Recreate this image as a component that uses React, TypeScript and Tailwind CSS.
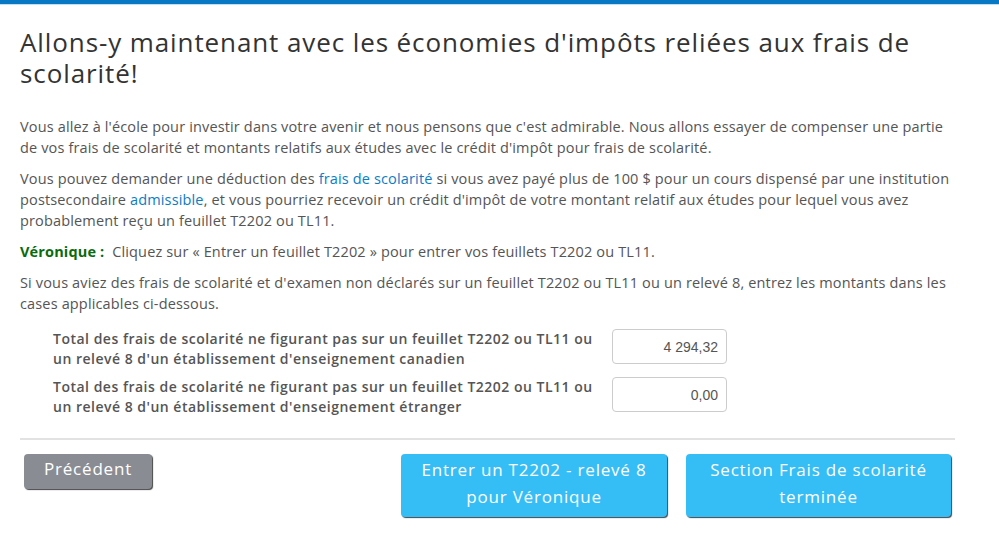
import React from 'react';

const rows = [
    { label: "Total des frais de scolarité ne figurant pas sur un feuillet T2202 ou TL11 ou un relevé 8 d'un établissement d'enseignement canadien", value: '4 294,32' },
    { label: "Total des frais de scolarité ne figurant pas sur un feuillet T2202 ou TL11 ou un relevé 8 d'un établissement d'enseignement étranger", value: '0,00' },
];

export default function App() {
    return (
        <div className="w-[999px] h-[545px] bg-white overflow-hidden font-['Open_Sans','Noto_Sans',sans-serif]">
            {/* top stripe */}
            <div className="h-[4px] bg-[#0678c4]" />
            <div className="h-[1px] bg-[#bfdff3]" />

            <div className="pl-[20px] pr-[39px] pt-[22px]">
                <h1 className="text-[26px] leading-[31px] text-[#333] tracking-[0.9px] w-[935px]">
                    Allons-y maintenant avec les économies d'impôts reliées aux frais de scolarité!
                </h1>

                <div className="mt-[27px] text-[14.5px] leading-[21px] text-[#555] tracking-[0.15px] flex flex-col gap-[10px]">
                    <p>
                        Vous allez à l'école pour investir dans votre avenir et nous pensons que c'est admirable. Nous allons essayer de compenser une partie de vos frais de scolarité et montants relatifs aux études avec le crédit d'impôt pour frais de scolarité.
                    </p>
                    <p>
                        Vous pouvez demander une déduction des <span className="text-[#0b7dc6]">frais de scolarité</span> si vous avez payé plus de 100 $ pour un cours dispensé par une institution postsecondaire <span className="text-[#0b7dc6]">admissible</span>, et vous pourriez recevoir un crédit d'impôt de votre montant relatif aux études pour lequel vous avez probablement reçu un feuillet T2202 ou TL11.
                    </p>
                    <p>
                        <strong className="text-[#0a6b0a] font-bold">Véronique :</strong>&nbsp; Cliquez sur « Entrer un feuillet T2202 » pour entrer vos feuillets T2202 ou TL11.
                    </p>
                    <p>
                        Si vous aviez des frais de scolarité et d'examen non déclarés sur un feuillet T2202 ou TL11 ou un relevé 8, entrez les montants dans les cases applicables ci-dessous.
                    </p>
                </div>

                {/* amount rows */}
                <div className="mt-[15px] pl-[33px] flex flex-col gap-[8px]">
                    {rows.map((r, i) => (
                        <div key={i} className="flex items-start">
                            <div className="w-[545px] text-[14px] leading-[20px] font-semibold tracking-[0.5px] text-[#555]">{r.label}</div>
                            <input
                                readOnly
                                value={r.value}
                                className="ml-[14px] mt-0 w-[115px] h-[35px] border border-[#ccc] rounded-[4px] text-right pr-[8px] text-[14px] text-[#555] font-['Liberation_Sans',Arial,sans-serif] outline-none"
                            />
                        </div>
                    ))}
                </div>

                <div className="mt-[21px] border-t-2 border-[#e2e2e2] w-[935px]" />

                {/* buttons */}
                <div className="mt-[14px] flex items-start w-[931px] tracking-[0.8px]">
                    <button className="ml-[4px] w-[128px] h-[35px] rounded-[4px] bg-[#8a8c93] text-white text-[17px] leading-[20px] pb-[5px] shadow-[1px_1px_1px_#444]">
                        Précédent
                    </button>
                    <div className="ml-auto flex gap-[19px]">
                        <button className="w-[266px] h-[63px] rounded-[4px] bg-[#35bdf6] text-white text-[17px] leading-[27px] pb-[5px] shadow-[1px_1px_1px_#444]">
                            Entrer un T2202 - relevé 8<br />pour Véronique
                        </button>
                        <button className="w-[265px] h-[63px] rounded-[4px] bg-[#35bdf6] text-white text-[17px] leading-[27px] pb-[5px] shadow-[1px_1px_1px_#444]">
                            Section Frais de scolarité<br />terminée
                        </button>
                    </div>
                </div>
            </div>
        </div>
    );
}
